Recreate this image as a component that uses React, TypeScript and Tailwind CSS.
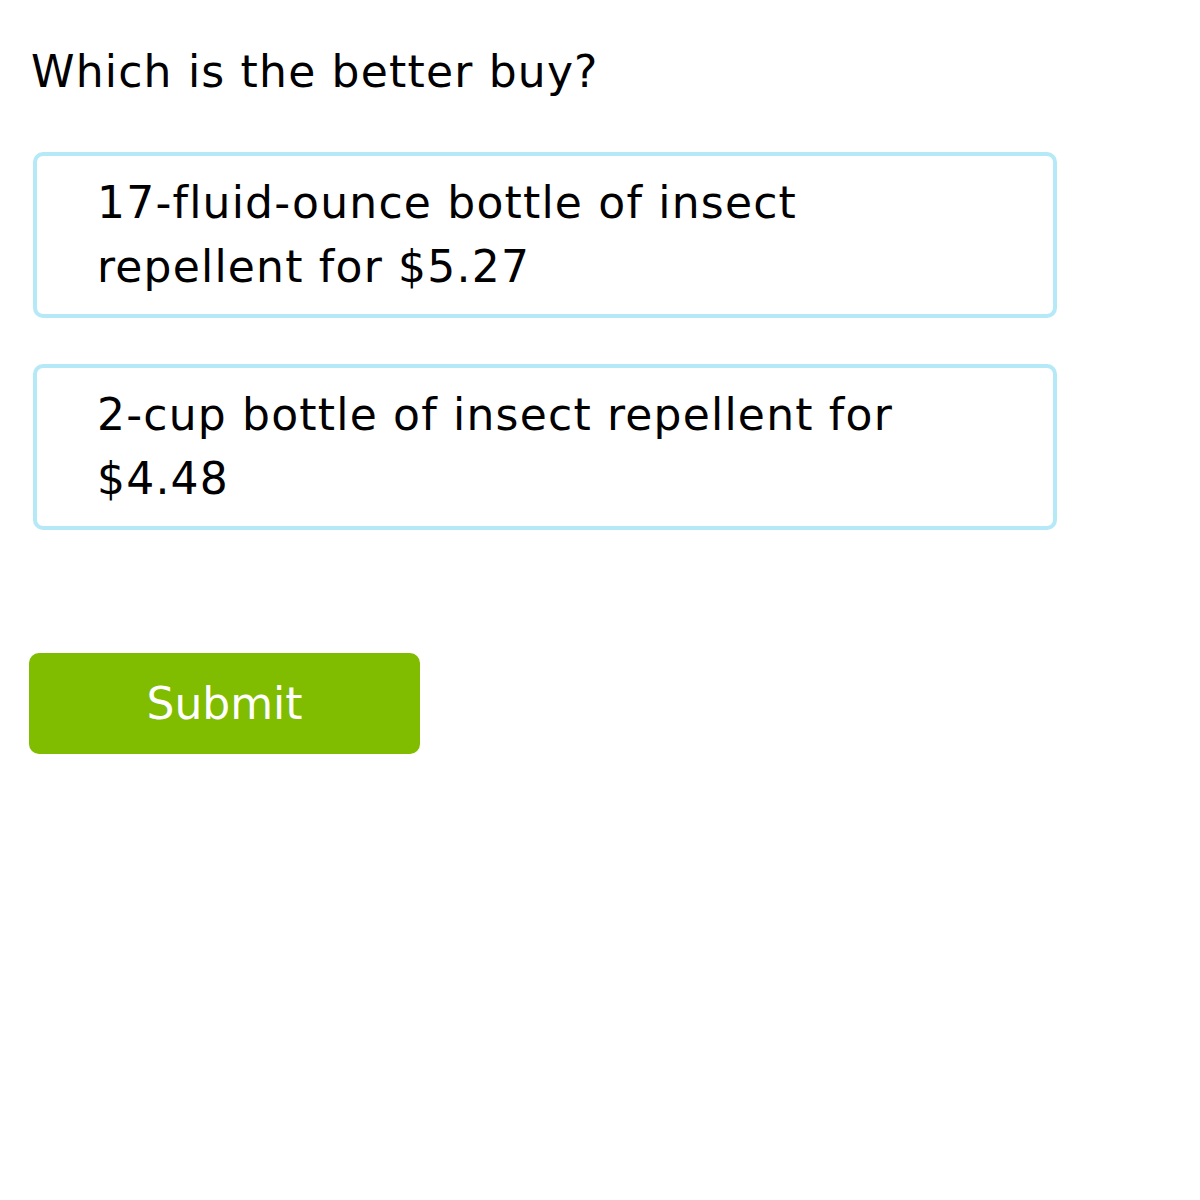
export default function App() {
  const options = [
    '17-fluid-ounce bottle of insect repellent for $5.27',
    '2-cup bottle of insect repellent for $4.48',
  ]

  return (
    <div className="min-h-[1200px] w-[1200px] bg-white text-black font-['DejaVu_Sans',sans-serif] [font-variant-ligatures:none]">
      <div className="pl-8 pt-[40px]">
        <h1 className="text-[44px] leading-[64px] font-normal tracking-[1.2px] -ml-[1px]">Which is the better buy?</h1>

        <div className="mt-[48px] flex flex-col gap-[46px] w-[1025px] pl-[1px]">
          {options.map(o => (
            <div key={o} className="rounded-[10px] border-[4px] border-[#b5e9f8] bg-white pl-[60px] pr-[100px] py-[15px]">
              <p className="text-[44px] leading-[64px] tracking-[1.2px]">{o}</p>
            </div>
          ))}
        </div>

        <button type="button"
          className="mt-[123px] -ml-[3px] w-[391px] h-[101px] rounded-[10px] bg-[#80bc00] text-white text-[44px]">
          Submit
        </button>
      </div>
    </div>
  )
}
